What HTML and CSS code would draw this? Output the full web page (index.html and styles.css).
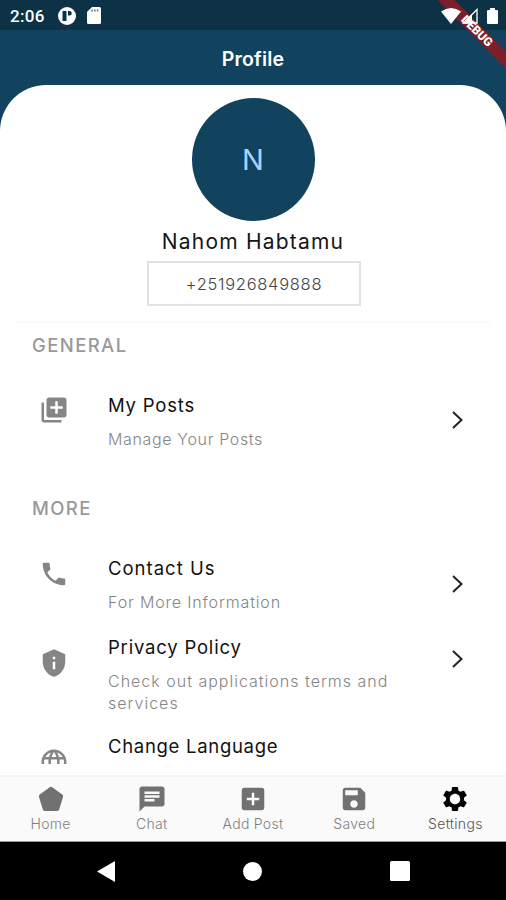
FILE: index.html
```
<!DOCTYPE html>
<html lang="en">
	<head>
		<meta charset="UTF-8">
		<meta name="viewport" content="width=device-width, initial-scale=1.0">
		<title>Profile</title>
		<link rel="stylesheet" href="styles.css">
	</head>
	<body>
		<div class="status-bar">
			<span class="clock">2:06</span>
			<svg class="status-app" width="18" height="18" viewBox="0 0 18 18">
				<circle cx="9" cy="9" r="9" fill="#fff"/>
				<path d="M4.500 4v10h4V4zM10 4v4.500h1.500A2.200 2.200 0 0 0 11.500 4z" fill="#0d3246"/>
			</svg>
			<svg width="14" height="17" viewBox="0 0 14 17">
				<path d="M5 0h7.500Q14 0 14 1.500v14q0 1.500-1.500 1.500h-11Q0 17 0 15.500V5z" fill="#fff"/>
				<path d="M5 2.500v2M7.800 2.500v2M10.600 2.500v2" stroke="#5b7482" stroke-width="1.500"/>
			</svg>
			<div class="status-right">
				<svg width="20" height="16" viewBox="0 0 20 16">
					<path d="M0 3.500Q10-3.500 20 3.500L10 16z" fill="#fff"/>
				</svg>
				<svg class="signal" width="16" height="16" viewBox="0 0 16 16">
					<path d="M15 1.500V15H1.500z" fill="none" stroke="#fff" stroke-width="1.300"/>
					<path d="M10 6v9H1z" fill="#fff"/>
				</svg>
				<svg width="11" height="16" viewBox="0 0 11 16">
					<path d="M3 0h5v2h2q1 0 1 1v12q0 1-1 1H1q-1 0-1-1V3q0-1 1-1h2z" fill="#fff"/>
				</svg>
			</div>
		</div>
		<div class="debug"><span>DEBUG</span></div>
		<header class="app-bar"><h1>Profile</h1></header>
		<main>
			<div class="sheet">
				<div class="avatar">N</div>
				<h2 class="name">Nahom Habtamu</h2>
				<div class="phone">+251926849888</div>
				<hr>
				<h3 class="general">GENERAL</h3>
				<a class="row posts">
					<svg class="icon" viewBox="0 0 24 24"><path d="M4 6H2v14c0 1.100.9 2 2 2h14v-2H4V6zm16-4H8c-1.100 0-2 .9-2 2v12c0 1.100.9 2 2 2h12c1.100 0 2-.9 2-2V4c0-1.100-.9-2-2-2zm-1 9h-4v4h-2v-4H9V9h4V5h2v4h4v2z"/></svg>
					<div>
						<p class="title">My Posts</p>
						<p class="sub">Manage Your Posts</p>
					</div>
					<svg class="chevron" viewBox="0 0 11 18"><path d="M1 1l8.500 8L1 17"/></svg>
				</a>
				<h3 class="more">MORE</h3>
				<a class="row contact">
					<svg class="icon" viewBox="0 0 24 24"><path d="M6.620 10.790c1.440 2.830 3.760 5.140 6.590 6.590l2.200-2.200c.27-.27.67-.36 1.020-.24 1.120.37 2.330.57 3.570.57.55 0 1 .45 1 1V20c0 .55-.45 1-1 1-9.390 0-17-7.610-17-17 0-.55.45-1 1-1h3.500c.55 0 1 .45 1 1 0 1.250.2 2.450.57 3.570.11.35.03.74-.25 1.020l-2.200 2.200z"/></svg>
					<div>
						<p class="title">Contact Us</p>
						<p class="sub">For More Information</p>
					</div>
					<svg class="chevron" viewBox="0 0 11 18"><path d="M1 1l8.500 8L1 17"/></svg>
				</a>
				<a class="row privacy">
					<svg class="icon" viewBox="0 0 24 24"><path d="M12 1L3 5v6c0 5.550 3.840 10.740 9 12 5.160-1.260 9-6.450 9-12V5l-9-4zm-1 6h2v2h-2V7zm0 4h2v6h-2v-6z"/></svg>
					<div>
						<p class="title">Privacy Policy</p>
						<p class="sub">Check out applications terms and<br>services</p>
					</div>
					<svg class="chevron" viewBox="0 0 11 18"><path d="M1 1l8.500 8L1 17"/></svg>
				</a>
				<a class="row language">
					<svg class="icon" viewBox="0 0 24 24"><path d="M11.990 2C6.470 2 2 6.480 2 12s4.470 10 9.990 10C17.520 22 22 17.520 22 12S17.520 2 11.990 2zm6.930 6h-2.950c-.32-1.250-.78-2.450-1.380-3.560 1.840.63 3.370 1.910 4.330 3.560zM12 4.040c.83 1.200 1.480 2.530 1.910 3.960h-3.820c.43-1.430 1.080-2.760 1.910-3.960zM4.260 14C4.100 13.360 4 12.690 4 12s.1-1.360.26-2h3.380c-.08.66-.14 1.320-.14 2s.06 1.340.14 2H4.260zm.82-6c.96-1.660 2.490-2.930 4.330-3.560C8.810 5.550 8.350 6.750 8.030 8H5.080zM14.340 14H9.660c-.09-.66-.16-1.320-.16-2s.07-1.350.16-2h4.680c.09.65.16 1.320.16 2s-.07 1.340-.16 2zm2.020 0c.08-.66.14-1.320.14-2s-.06-1.340-.14-2h3.380c.16.64.26 1.310.26 2s-.1 1.360-.26 2h-3.380z"/></svg>
					<div>
						<p class="title">Change Language</p>
					</div>
				</a>
			</div>
		</main>
		<nav class="tabs">
			<a>
				<svg viewBox="0 0 24 24"><path d="M11 2.600q1-.7 2 0l8 5.800q1 .7.600 1.900l-3 9.900q-.4 1.300-1.600 1.300H7q-1.200 0-1.600-1.300l-3-9.900q-.4-1.200.6-1.900z"/></svg>
				<span>Home</span>
			</a>
			<a>
				<svg viewBox="0 0 24 24"><path d="M20 2H4c-1.100 0-1.990.9-1.990 2L2 22l4-4h14c1.100 0 2-.9 2-2V4c0-1.100-.9-2-2-2zM6 9h12v2H6V9zm8 5H6v-2h8v2zm4-6H6V6h12v2z"/></svg>
				<span>Chat</span>
			</a>
			<a>
				<svg viewBox="0 0 24 24"><path d="M19 3H5c-1.110 0-2 .9-2 2v14c0 1.100.89 2 2 2h14c1.100 0 2-.9 2-2V5c0-1.100-.9-2-2-2zm-2 10h-4v4h-2v-4H7v-2h4V7h2v4h4v2z"/></svg>
				<span>Add Post</span>
			</a>
			<a>
				<svg viewBox="0 0 24 24"><path d="M17 3H5c-1.110 0-2 .9-2 2v14c0 1.100.89 2 2 2h14c1.100 0 2-.9 2-2V7l-4-4zm-5 16c-1.660 0-3-1.340-3-3s1.340-3 3-3 3 1.340 3 3-1.340 3-3 3zm3-10H5V5h10v4z"/></svg>
				<span>Saved</span>
			</a>
			<a class="active">
				<svg viewBox="0 0 24 24"><path d="M19.140 12.940c.04-.3.06-.61.06-.94 0-.32-.02-.64-.07-.94l2.030-1.580c.18-.14.23-.41.12-.61l-1.920-3.320c-.12-.22-.37-.29-.59-.22l-2.390.96c-.5-.38-1.030-.7-1.620-.94l-.36-2.540c-.04-.24-.24-.41-.48-.41h-3.840c-.24 0-.43.17-.47.41l-.36 2.540c-.59.24-1.130.57-1.620.94l-2.390-.96c-.22-.08-.47 0-.59.22L2.740 8.870c-.12.21-.08.47.12.61l2.030 1.580c-.05.3-.09.63-.09.94s.02.64.07.94l-2.030 1.580c-.18.14-.23.41-.12.61l1.920 3.320c.12.22.37.29.59.22l2.390-.96c.5.38 1.030.7 1.620.94l.36 2.540c.05.24.24.41.48.41h3.840c.24 0 .44-.17.47-.41l.36-2.540c.59-.24 1.130-.56 1.620-.94l2.390.96c.22.08.47 0 .59-.22l1.920-3.320c.12-.22.07-.47-.12-.61l-2.010-1.580zM12 16.200c-2.320 0-4.200-1.880-4.200-4.200s1.880-4.200 4.200-4.200 4.200 1.880 4.200 4.200-1.880 4.200-4.200 4.200z"/></svg>
				<span>Settings</span>
			</a>
		</nav>
		<footer class="system-nav">
			<svg width="18" height="21" viewBox="0 0 18 21"><path d="M18 0v21L0 10.500z"/></svg>
			<svg width="19" height="19" viewBox="0 0 19 19"><circle cx="9.500" cy="9.500" r="9.500"/></svg>
			<svg width="20" height="20" viewBox="0 0 20 20"><rect width="20" height="20" rx="1.500"/></svg>
		</footer>
	</body>
</html>
```

FILE: styles.css
```
* {
    box-sizing: border-box;
}
body {
    background-color: #11435e;
    display: flex;
    flex-direction: column;
    font-family: Inter, "Liberation Sans", sans-serif;
    height: 900px;
    margin: 0;
    overflow: hidden;
    position: relative;
    width: 506px;
}
h1, h2, h3, p {
    font-weight: 400;
    margin: 0;
}
svg {
    display: block;
    flex-shrink: 0;
}
.status-bar {
    align-items: center;
    background-color: #0d3246;
    color: white;
    display: flex;
    height: 30px;
    padding: 1px 8px 0 10px;
}
.clock {
    font-family: Roboto, sans-serif;
    font-size: 17px;
    font-weight: 500;
    letter-spacing: .3px;
    width: 48px;
}
.status-app {
    margin-right: 11px;
}
.status-right {
    display: flex;
    margin-left: auto;
    position: relative;
    z-index: 2;
}
.signal {
    margin: 0 9px 0 1px;
}
.debug {
    background-color: #7b1f2b;
    color: white;
    font-family: Roboto, sans-serif;
    font-size: 12px;
    font-weight: 900;
    height: 12px;
    left: 417px;
    line-height: 12px;
    position: absolute;
    text-align: center;
    top: 25px;
    transform: rotate(45deg);
    width: 120px;
}
.app-bar {
    height: 55px;
}
.app-bar h1 {
    color: white;
    font-size: 19.5px;
    font-weight: 600;
    letter-spacing: .2px;
    line-height: 58px;
    text-align: center;
}
main {
    background-color: white;
    border-radius: 46px 46px 0 0;
    height: 690px;
    overflow: hidden;
}
.sheet {
    height: 679px;
    overflow: hidden;
    padding-top: 13px;
}
.avatar {
    background-color: #11435e;
    border-radius: 50%;
    color: #a9d2fb;
    font-size: 29px;
    height: 123px;
    line-height: 123px;
    margin: 0 auto;
    text-align: center;
    width: 123px;
}
.name {
    color: #161616;
    font-size: 21px;
    letter-spacing: 1.2px;
    line-height: 26px;
    margin-top: 8px;
    text-align: center;
}
.phone {
    border: 2px solid #e3e1e2;
    color: #444;
    font-size: 16.5px;
    font-weight: 300;
    height: 45px;
    letter-spacing: .7px;
    line-height: 42px;
    margin: 6px auto 0 147px;
    text-align: center;
    width: 214px;
}
hr {
    background-color: #f9f9f9;
    border: 0;
    height: 2px;
    margin: 15px 16px 9px;
}
h3 {
    color: #999;
    font-size: 18.5px;
    font-weight: 500;
    letter-spacing: 1.4px;
    line-height: 26px;
    margin-left: 32px;
}
.more {
    margin-top: 45px;
}
.row {
    align-items: start;
    display: grid;
    grid-template-columns: 30px 1fr 11px;
    column-gap: 39px;
    padding: 0 43px 0 39px;
}
.posts, .contact {
    margin-top: 34px;
}
.privacy {
    margin-top: 21px;
}
.language {
    margin-top: 19px;
}
.title {
    color: #111;
    font-size: 18.5px;
    letter-spacing: .8px;
    line-height: 26px;
}
.contact .title {
    letter-spacing: 1px;
}
.language .title {
    letter-spacing: .7px;
}
.sub {
    color: #858585;
    font-size: 16px;
    font-weight: 300;
    letter-spacing: .65px;
    line-height: 22px;
    margin-top: 10px;
    white-space: nowrap;
}
.contact .sub {
    letter-spacing: .85px;
}
.privacy .sub {
    letter-spacing: 1px;
}
.icon {
    fill: #858585;
    height: 30px;
    margin-top: 3px;
    width: 30px;
}
.contact .icon {
    margin-top: 4px;
}
.privacy .icon, .language .icon {
    margin-top: 14px;
}
.chevron {
    fill: none;
    height: 18px;
    margin-top: 19px;
    stroke: #222;
    stroke-width: 2;
    width: 11px;
}
.contact .chevron {
    margin-top: 20px;
}
.privacy .chevron {
    margin-top: 16px;
}
.tabs {
    background-color: #fafafa;
    border-top: 2px solid #f4f4f4;
    border-bottom: 1px solid #999;
    display: grid;
    grid-template-columns: repeat(5, 1fr);
    height: 67px;
}
.tabs a {
    align-items: center;
    color: #808080;
    display: flex;
    flex-direction: column;
    font-size: 14px;
    font-weight: 300;
    letter-spacing: .3px;
    line-height: 20px;
    padding-top: 7px;
}
.tabs svg {
    fill: #717171;
    height: 30px;
    width: 30px;
}
.tabs .active {
    color: #555;
}
.tabs .active svg {
    fill: #000;
}
.system-nav {
    align-items: center;
    background-color: black;
    display: flex;
    fill: white;
    gap: 128px;
    height: 58px;
    padding-left: 97px;
}
```
